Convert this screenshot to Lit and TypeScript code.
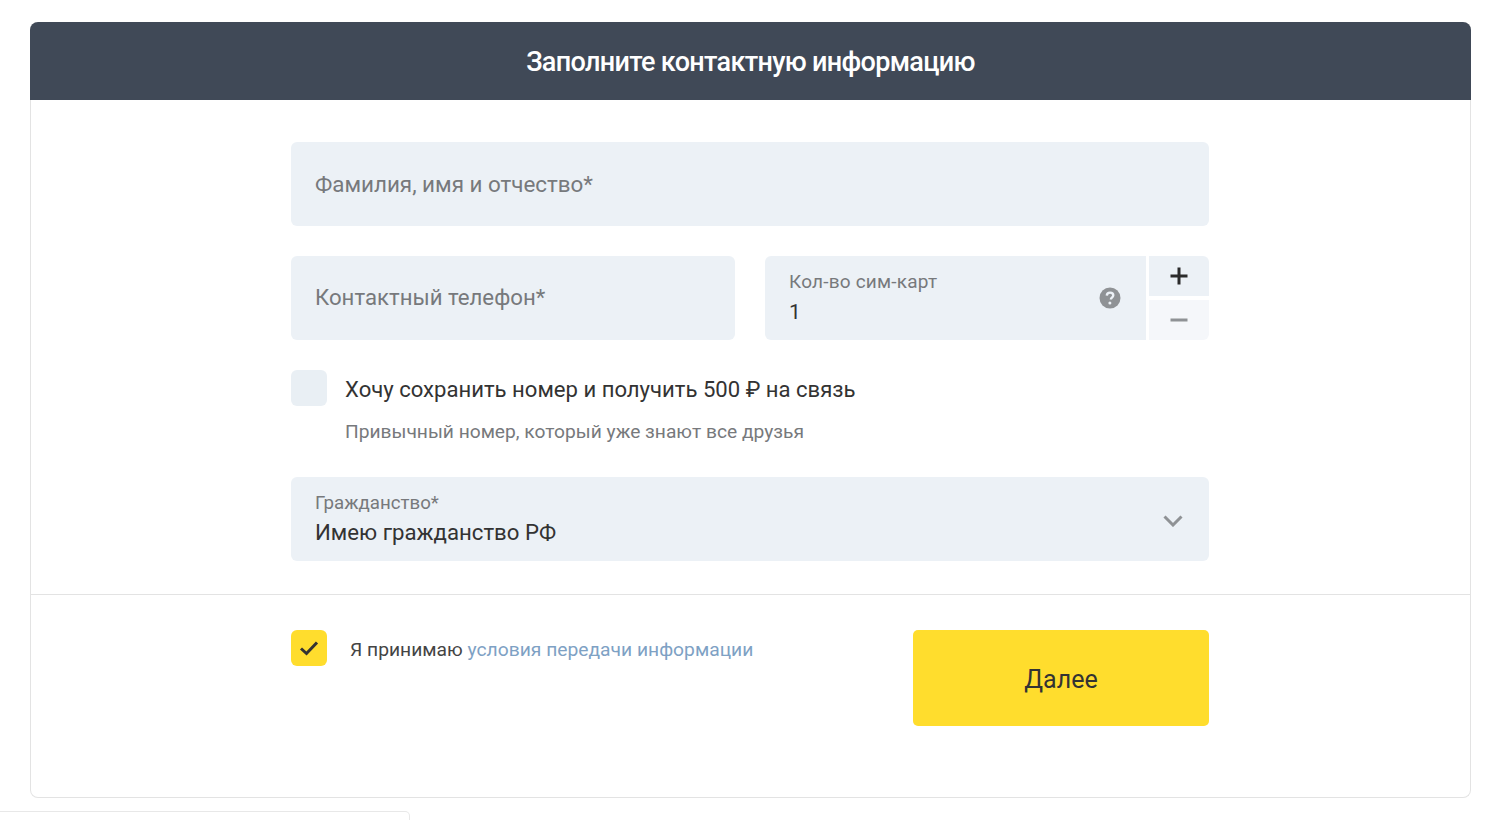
import { LitElement, html, css } from "lit";
import { customElement } from "lit/decorators.js";

@customElement("app-root")
export class AppRoot extends LitElement {
  static styles = css`
    :host { display: block; height: 820px; overflow: hidden; background: #fff; font-family: Roboto, "Noto Sans", sans-serif; color: #333; }
    .page { padding: 22px 29px 0 30px; }
    .card { height: 776px; box-sizing: border-box; border: 1px solid #e3e3e3; border-top: 0; border-radius: 8px; display: flex; flex-direction: column; }
    .head { height: 78px; box-sizing: border-box; padding-top: 1px; margin: 0 -1px; background: #404957; border-radius: 8px 8px 0 0; color: #fff; display: flex; align-items: center; justify-content: center; font-size: 27px; font-weight: 500; letter-spacing: -0.67px; }
    .form { width: 918px; margin-left: 260px; padding-top: 42px; display: flex; flex-direction: column; height: 452px; box-sizing: content-box; }
    .field { height: 84px; background: #ecf1f6; border-radius: 6px; box-sizing: border-box; padding: 0 24px; display: flex; align-items: center; color: #77797c; font-size: 22.4px; }
    .row { display: flex; margin-top: 30px; gap: 30px; }
    .phone { width: 444px; flex: none; font-size: 22.2px; padding-bottom: 2px; }
    .sims { flex: 1; display: flex; gap: 3px; }
    .count { flex: 1; justify-content: space-between; border-radius: 6px 0 0 6px; padding-right: 25px; }
    .stack { display: flex; flex-direction: column; }
    .label { font-size: 19px; line-height: 22px; color: #77797c; }
    .count .label { letter-spacing: 0.2px; }
    .value { font-size: 21px; line-height: 26px; color: #333; margin-top: 6px; }
    .step { width: 60px; display: flex; flex-direction: column; gap: 4px; }
    .step div { flex: 1; display: flex; align-items: center; justify-content: center; }
    .plus { background: #ecf1f6; border-radius: 0 6px 0 0; }
    .minus { background: #f5f7fa; border-radius: 0 0 6px 0; }
    .keep { display: flex; gap: 18px; margin-top: 30px; height: 36px; align-items: center; }
    .box { width: 36px; height: 36px; border-radius: 6px; background: #e9eff4; flex: none; display: flex; align-items: center; justify-content: center; }
    .box.on { background: #ffdd2d; }
    .keep-text { font-size: 22.1px; color: #333; padding-top: 2px; }
    .hint { margin: 14px 0 0 54px; font-size: 19.2px; line-height: 24px; color: #77797c; }
    .select { margin-top: 33px; justify-content: space-between; padding-right: 26px; }
    .select .stack { padding-bottom: 1px; }
    .select .label { font-size: 18.7px; }
    .select .value { margin-top: 5px; font-size: 22.2px; }
    .select svg { margin-top: 4px; }
    .foot { border-top: 1px solid #e3e3e3; flex: 1; padding-top: 35px; }
    .foot-in { width: 918px; margin-left: 260px; display: flex; align-items: flex-start; }
    .terms { font-size: 19.25px; margin-left: 23px; line-height: 40px; color: #444; flex: none; width: 563px; }
    .terms span { color: #7ea1c4; }
    .btn { width: 296px; height: 96px; box-sizing: border-box; padding-top: 3px; background: #ffdd2d; border-radius: 5px; display: flex; align-items: center; justify-content: center; font-size: 25px; color: #333; }
    .strip { width: 410px; height: 20px; margin-top: 13px; box-sizing: border-box; border: 1px solid #e8e8e8; border-left: 0; border-radius: 0 5px 0 0; }
  `;

  render() {
    return html`
      <div class="page">
        <div class="card">
          <div class="head">Заполните контактную информацию</div>
          <div class="form">
            <div class="field">Фамилия, имя и отчество*</div>
            <div class="row">
              <div class="field phone">Контактный телефон*</div>
              <div class="sims">
                <div class="field count">
                  <div class="stack"><span class="label">Кол-во сим-карт</span><span class="value">1</span></div>
                  <svg width="22" height="22" viewBox="0 0 22 22"><circle cx="11" cy="11" r="10.500" fill="#8f9295"/><path d="M7.800 8.600c.1-1.900 1.300-3 3.300-3 1.900 0 3.200 1.100 3.200 2.700 0 1.100-.6 1.800-1.500 2.400-.7.500-.9.800-.9 1.700" stroke="#ecf1f6" stroke-width="2.400" fill="none"/><circle cx="10.900" cy="16" r="1.500" fill="#ecf1f6"/></svg>
                </div>
                <div class="step">
                  <div class="plus"><svg width="20" height="20" viewBox="0 0 20 20"><path d="M10 1.500v17M1.500 10h17" stroke="#2b2b2b" stroke-width="3" fill="none"/></svg></div>
                  <div class="minus"><svg width="20" height="6" viewBox="0 0 20 6"><path d="M1.500 3h17" stroke="#8f9295" stroke-width="3" fill="none"/></svg></div>
                </div>
              </div>
            </div>
            <div class="keep">
              <div class="box"></div>
              <span class="keep-text">Хочу сохранить номер и получить 500 ₽ на связь</span>
            </div>
            <div class="hint">Привычный номер, который уже знают все друзья</div>
            <div class="field select">
              <div class="stack"><span class="label">Гражданство*</span><span class="value">Имею гражданство РФ</span></div>
              <svg width="20" height="12" viewBox="0 0 20 12"><path d="M1.500 1.500 10 10l8.500-8.500" stroke="#8f9295" stroke-width="3" fill="none"/></svg>
            </div>
          </div>
          <div class="foot">
            <div class="foot-in">
              <div class="box on"><svg width="20" height="16" viewBox="0 0 20 16"><path d="M2 8.500 7.500 13.500 18 2.500" stroke="#333" stroke-width="3" fill="none"/></svg></div>
              <div class="terms">Я принимаю <span>условия передачи информации</span></div>
              <div class="btn">Далее</div>
            </div>
          </div>
        </div>
      </div>
      <div class="strip"></div>
    `;
  }
}
